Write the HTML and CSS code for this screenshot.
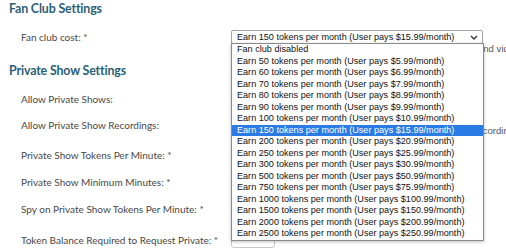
FILE: index.html
```html
<!DOCTYPE html>
<html lang="en">
<head>
<meta charset="utf-8">
<title>Settings</title>
<link rel="stylesheet" href="styles.css">
</head>
<body>
<div class="page">
  <section class="section">
    <h2 class="section-title">Fan Club Settings</h2>
    <div class="row">
      <div class="label">Fan club cost: *</div>
      <div class="field">
        <div class="select">
          <span class="select-value">Earn 150 tokens per month (User pays $15.99/month)</span>
          <svg class="chevron" width="8" height="5" viewBox="0 0 8 5"><path d="M1 1 L4 4 L7 1" fill="none" stroke="#333" stroke-width="1.4"/></svg>
          <ul class="select-list">
            <li class="option">Fan club disabled</li>
            <li class="option">Earn 50 tokens per month (User pays $5.99/month)</li>
            <li class="option">Earn 60 tokens per month (User pays $6.99/month)</li>
            <li class="option">Earn 70 tokens per month (User pays $7.99/month)</li>
            <li class="option">Earn 80 tokens per month (User pays $8.99/month)</li>
            <li class="option">Earn 90 tokens per month (User pays $9.99/month)</li>
            <li class="option">Earn 100 tokens per month (User pays $10.99/month)</li>
            <li class="option option-selected">Earn 150 tokens per month (User pays $15.99/month)</li>
            <li class="option">Earn 200 tokens per month (User pays $20.99/month)</li>
            <li class="option">Earn 250 tokens per month (User pays $25.99/month)</li>
            <li class="option">Earn 300 tokens per month (User pays $30.99/month)</li>
            <li class="option">Earn 500 tokens per month (User pays $50.99/month)</li>
            <li class="option">Earn 750 tokens per month (User pays $75.99/month)</li>
            <li class="option">Earn 1000 tokens per month (User pays $100.99/month)</li>
            <li class="option">Earn 1500 tokens per month (User pays $150.99/month)</li>
            <li class="option">Earn 2000 tokens per month (User pays $200.99/month)</li>
            <li class="option">Earn 2500 tokens per month (User pays $250.99/month)</li>
          </ul>
        </div>
        <p class="hint">Fans who join the fan club get access to exclusive photos and videos.</p>
      </div>
    </div>
  </section>

  <section class="section">
    <h2 class="section-title section-title-next">Private Show Settings</h2>
    <div class="row">
      <div class="label">Allow Private Shows:</div>
      <div class="field"><span class="checkbox"></span></div>
    </div>
    <div class="row">
      <div class="label">Allow Private Show Recordings:</div>
      <div class="field">
        <span class="checkbox checkbox-small"></span>
        <p class="hint">Members can purchase and download your private show recordings.</p>
      </div>
    </div>
    <div class="row">
      <div class="label">Private Show Tokens Per Minute: *</div>
      <div class="field"><span class="input"></span></div>
    </div>
    <div class="row">
      <div class="label">Private Show Minimum Minutes: *</div>
      <div class="field"><span class="input"></span></div>
    </div>
    <div class="row row-tall">
      <div class="label">Spy on Private Show Tokens Per Minute: *</div>
      <div class="field"><span class="input"></span></div>
    </div>
    <div class="row">
      <div class="label">Token Balance Required to Request Private: *</div>
      <div class="field"><span class="input"></span></div>
    </div>
  </section>
</div>
</body>
</html>
```

FILE: styles.css
```css
html, body {
  margin: 0;
  padding: 0;
  background: #ffffff;
}

.page {
  padding-left: 9px;
  font-family: Lato, "Liberation Sans", sans-serif;
  overflow: hidden;
  height: 250px;
}

.section-title {
  margin: 0 0 7px 0;
  font-size: 12.4px;
  line-height: 17px;
  font-weight: 700;
  letter-spacing: -0.15px;
  color: #2c5f77;
}

.section-title-next {
  margin-top: 2px;
}

.row {
  display: flex;
  padding: 6px 0 6px 12px;
}

.row-tall {
  padding-bottom: 10px;
}

.label {
  width: 210px;
  flex: none;
  font-size: 10px;
  line-height: 14px;
  color: #474747;
}

.field {
  display: flex;
  flex-direction: column;
  align-items: flex-start;
  min-width: 0;
  white-space: nowrap;
}

.select {
  position: relative;
  box-sizing: border-box;
  width: 252px;
  height: 14px;
  border: 1px solid #a3a3a3;
  border-radius: 2px;
  display: flex;
  align-items: center;
  padding-left: 5px;
  font-family: "Liberation Sans", Arial, sans-serif;
  font-size: 9.1px;
  color: #111;
}

.select-value {
  flex: 1;
  line-height: 12px;
}

.chevron {
  margin-right: 4px;
}

.select-list {
  position: absolute;
  z-index: 2;
  top: 12px;
  left: -1px;
  width: 253px;
  box-sizing: border-box;
  margin: 0;
  padding: 0;
  list-style: none;
  background: #ffffff;
  border: 1px solid #8a8a8a;
  box-shadow: 0 1px 3px rgba(0, 0, 0, 0.25);
}

.option {
  height: 11.5px;
  line-height: 11.5px;
  padding-left: 5px;
  color: #111;
}

.option-selected {
  background: #2b7be4;
  color: #ffffff;
}

.hint {
  margin: 0;
  font-family: "Liberation Sans", Arial, sans-serif;
  font-size: 9.6px;
  line-height: 10px;
  color: #555;
}

.checkbox {
  display: block;
  width: 10px;
  height: 10px;
  margin-top: 2px;
  border: 1px solid #999;
  border-radius: 2px;
}

.checkbox-small {
  width: 8px;
  height: 6px;
  margin-top: 0;
}

.input {
  display: block;
  box-sizing: border-box;
  width: 44px;
  height: 15px;
  border: 1px solid #c8c8c8;
  border-radius: 3px;
}
```
